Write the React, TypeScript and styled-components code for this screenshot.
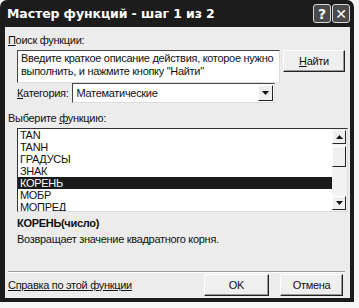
import styled, { createGlobalStyle } from 'styled-components';

const FUNCTIONS = ['TAN', 'TANH', 'ГРАДУСЫ', 'ЗНАК', 'КОРЕНЬ', 'МОБР', 'МОПРЕД'];
const SELECTED = 'КОРЕНЬ';

const GlobalStyle = createGlobalStyle`
  html, body {
    margin: 0;
    background: #f6f6f6;
  }
  body {
    font-family: 'Liberation Sans', Arial, sans-serif;
    font-size: 11px;
    letter-spacing: -0.3px;
    color: #111;
  }
`;

const Window = styled.div`
  width: 354px;
  height: 302px;
  box-sizing: border-box;
  background: #1c1c1c;
  border-radius: 7px 7px 0 0;
  padding: 0 4px 4px 5px;
  display: flex;
  flex-direction: column;
`;

const TitleBar = styled.div`
  height: 27px;
  flex: none;
  display: flex;
  align-items: center;
  justify-content: space-between;
  padding: 0 0 0 2px;
`;

const Title = styled.div`
  color: #fff;
  font-family: 'DejaVu Sans', Tahoma, sans-serif;
  font-weight: 700;
  font-size: 12.5px;
  letter-spacing: -0.1px;
`;

const TitleButtons = styled.div`
  display: flex;
  gap: 1px;
`;

const TitleButton = styled.div`
  width: 18px;
  height: 19px;
  box-sizing: border-box;
  border: 1px solid #d8d8d8;
  border-radius: 3px;
  background: #4a4a4a;
  color: #fff;
  display: flex;
  align-items: center;
  justify-content: center;
  font-family: 'DejaVu Sans', sans-serif;
  font-weight: 700;
  font-size: 14px;
  letter-spacing: 0;
`;

const Client = styled.div`
  flex: 1;
  background: #ececec;
  display: flex;
  flex-direction: column;
  padding: 6px 3px 0 3px;
  box-sizing: border-box;
`;

const Label = styled.div<{ $gap?: number }>`
  height: 14px;
  line-height: 14px;
  margin-top: ${(p) => p.$gap ?? 0}px;
  white-space: nowrap;
`;

const SearchRow = styled.div`
  display: flex;
  align-items: flex-start;
  margin: 3px 0 0 9px;
  gap: 3px;
`;

const SearchBox = styled.div`
  width: 263px;
  height: 33px;
  box-sizing: border-box;
  background: #fff;
  border: 1px solid;
  border-color: #444 #ddd #ddd #444;
  padding: 1px 3px;
  line-height: 13px;
`;

const Button = styled.div<{ $w: number }>`
  width: ${(p) => p.$w}px;
  height: 22px;
  box-sizing: border-box;
  background: #efefef;
  border: 1px solid;
  border-color: #fff #222 #222 #fff;
  box-shadow: inset -1px -1px 0 #999;
  display: flex;
  align-items: center;
  justify-content: center;
`;

const CategoryRow = styled.div`
  display: flex;
  align-items: center;
  margin: 0 0 0 9px;
  gap: 4px;
`;

const Select = styled.div`
  width: 203px;
  height: 20px;
  box-sizing: border-box;
  background: #fff;
  border: 1px solid;
  border-color: #444 #ddd #ddd #444;
  display: flex;
  align-items: center;
  justify-content: space-between;
  padding-left: 3px;
`;

const SelectArrow = styled.div`
  width: 15px;
  height: 16px;
  box-sizing: border-box;
  background: #efefef;
  border: 1px solid;
  border-color: #fff #222 #222 #fff;
  display: flex;
  align-items: center;
  justify-content: center;
  margin-right: 1px;
`;

const List = styled.div`
  margin: 3px 0 0 9px;
  width: 331px;
  height: 84px;
  box-sizing: border-box;
  background: #fff;
  border: 1px solid;
  border-color: #333 #ddd #ddd #333;
  display: flex;
  overflow: hidden;
`;

const Items = styled.div`
  flex: 1;
`;

const Item = styled.div<{ $selected: boolean }>`
  height: 12px;
  line-height: 12px;
  padding-left: 2px;
  background: ${(p) => (p.$selected ? '#1a1a1a' : 'transparent')};
  color: ${(p) => (p.$selected ? '#fff' : '#111')};
`;

const ScrollBar = styled.div`
  width: 15px;
  background: #f2f2f2;
  display: flex;
  flex-direction: column;
  justify-content: space-between;
  padding: 1px 0;
`;

const ScrollBtn = styled.div`
  width: 14px;
  height: 14px;
  box-sizing: border-box;
  background: #efefef;
  border: 1px solid;
  border-color: #fff #222 #222 #fff;
  display: flex;
  align-items: center;
  justify-content: center;
`;

const Thumb = styled.div`
  flex: 1;
  display: flex;
  flex-direction: column;
  padding: 2px 0 14px;
`;

const ThumbBox = styled.div`
  width: 14px;
  height: 21px;
  box-sizing: border-box;
  border: 1px solid;
  border-color: #fff #222 #222 #fff;
  background: #efefef;
`;

const Signature = styled.div`
  margin: 4px 0 0 9px;
  font-weight: 700;
  height: 15px;
  line-height: 15px;
`;

const Description = styled.div`
  margin: 1px 0 0 9px;
  height: 14px;
  line-height: 14px;
`;

const Spacer = styled.div`
  flex: 1;
`;

const Separator = styled.div`
  height: 0;
  border-top: 1px solid #999;
  border-bottom: 1px solid #fff;
  margin-right: 2px;
`;

const Footer = styled.div`
  display: flex;
  align-items: center;
  height: 23px;
  margin-bottom: 2px;
  padding-right: 4px;
`;

const HelpLink = styled.div`
  flex: 1;
  text-decoration: underline;
`;

const FooterButtons = styled.div`
  display: flex;
  gap: 11px;
`;

const Arrow = ({ up }: { up?: boolean }) => (
  <svg width="7" height="4" viewBox="0 0 7 4">
    <path d={up ? 'M0 4 L3.5 0 L7 4 Z' : 'M0 0 L7 0 L3.5 4 Z'} fill="#111" />
  </svg>
);

export default function App() {
  return (
    <>
      <GlobalStyle />
      <Window>
        <TitleBar>
          <Title>Мастер функций - шаг 1 из 2</Title>
          <TitleButtons>
            <TitleButton>?</TitleButton>
            <TitleButton>✕</TitleButton>
          </TitleButtons>
        </TitleBar>
        <Client>
          <Label>
            <u>П</u>оиск функции:
          </Label>
          <SearchRow>
            <SearchBox>
              Введите краткое описание действия, которое нужно выполнить, и нажмите кнопку "Найти"
            </SearchBox>
            <Button $w={62}>
              <span>
                <u>Н</u>айти
              </span>
            </Button>
          </SearchRow>
          <CategoryRow>
            <span>
              <u>К</u>атегория:
            </span>
            <Select>
              <span>Математические</span>
              <SelectArrow>
                <Arrow />
              </SelectArrow>
            </Select>
          </CategoryRow>
          <Label $gap={8}>
            Выберите <u>ф</u>ункцию:
          </Label>
          <List>
            <Items>
              {FUNCTIONS.map((f) => (
                <Item key={f} $selected={f === SELECTED}>
                  {f}
                </Item>
              ))}
            </Items>
            <ScrollBar>
              <ScrollBtn>
                <Arrow up />
              </ScrollBtn>
              <Thumb>
                <ThumbBox />
              </Thumb>
              <ScrollBtn>
                <Arrow />
              </ScrollBtn>
            </ScrollBar>
          </List>
          <Signature>КОРЕНЬ(число)</Signature>
          <Description>Возвращает значение квадратного корня.</Description>
          <Spacer />
          <Separator />
          <Footer>
            <HelpLink>Справка по этой функции</HelpLink>
            <FooterButtons>
              <Button $w={65}>OK</Button>
              <Button $w={63}>Отмена</Button>
            </FooterButtons>
          </Footer>
        </Client>
      </Window>
    </>
  );
}
